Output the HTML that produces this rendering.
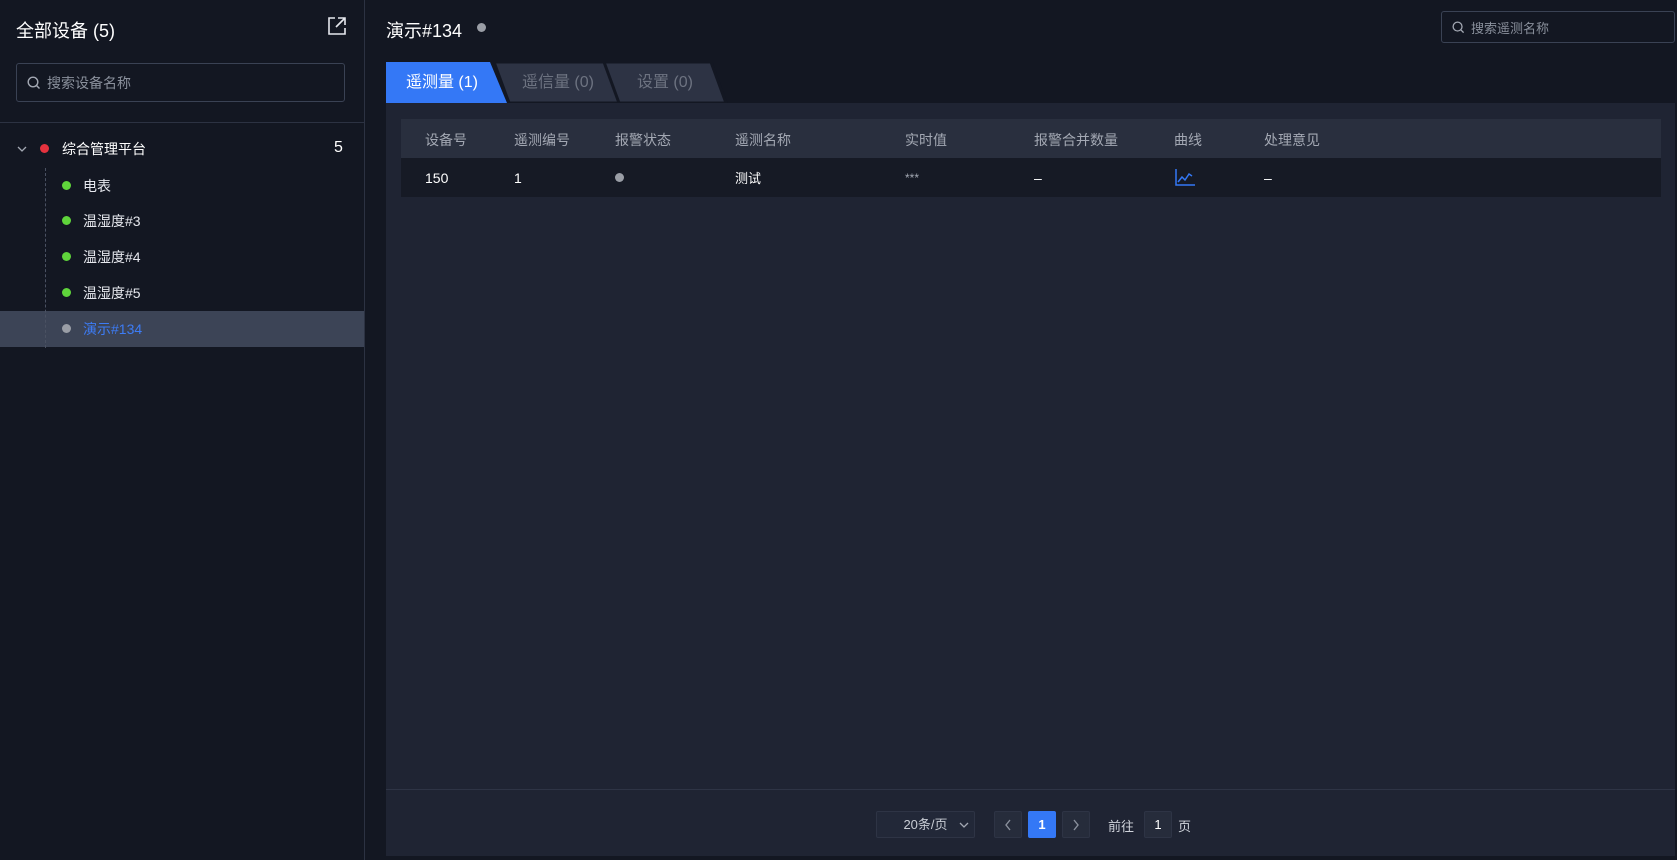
<!DOCTYPE html>
<html><head><meta charset="utf-8"><style>
*{box-sizing:border-box;margin:0;padding:0}
body{width:1677px;height:860px;background:#131722;font-family:"Liberation Sans","Noto Sans CJK SC",sans-serif;color:#e6e8ee;position:relative;overflow:hidden;font-size:14px}
.abs{position:absolute}
.side{left:0;top:0;width:365px;height:860px;border-right:1px solid #2c3242;background:#131722}
.dot{position:absolute;width:9px;height:9px;border-radius:50%}
.search{border:1px solid #3a4254;border-radius:3px;background:#131722;color:#8a909c}
.tab{top:62px;height:41px;line-height:41px;text-align:center;font-size:16px}
.th{top:121px;height:39px;line-height:39px;color:#a3a8b3;font-size:14px}
.td{top:159px;height:39px;line-height:39px;color:#fff;font-size:14px}
.pg{top:811px;height:27px;border:1px solid #2e3445;border-radius:2px;background:#262c3b;color:#c8ccd4;text-align:center;line-height:25px;font-size:13px}
</style></head><body>
<div class="abs side">
  <div class="abs" style="left:16px;top:17px;font-size:18px;color:#fff">全部设备 (5)</div>
  <svg class="abs" style="left:327px;top:16px" width="20" height="20" viewBox="0 0 20 20" fill="none" stroke="#e6e8ee" stroke-width="1.6"><path d="M8 2H2v16h16v-6"/><path d="M11 2h7v7M18 2l-9 9"/></svg>
  <div class="abs search" style="left:16px;top:63px;width:329px;height:39px">
    <svg class="abs" style="left:10px;top:12px" width="14" height="14" viewBox="0 0 14 14" fill="none" stroke="#a3a8b3" stroke-width="1.4"><circle cx="6" cy="6" r="4.8"/><path d="M9.5 9.5l3 3"/></svg>
    <span class="abs" style="left:30px;top:9px;font-size:14px">搜索设备名称</span>
  </div>
  <div class="abs" style="left:0;top:122px;width:365px;height:1px;background:#2c3242"></div>
  <svg class="abs" style="left:17px;top:145px" width="10" height="8" viewBox="0 0 10 8" fill="none" stroke="#a3a8b3" stroke-width="1.3"><path d="M1 2l4 4 4-4"/></svg>
  <div class="dot" style="left:40px;top:144px;background:#e5323e"></div>
  <div class="abs" style="left:62px;top:139px;font-size:14px;color:#fff">综合管理平台</div>
  <div class="abs" style="left:334px;top:139px;font-size:16px;color:#fff">5</div>
  <div class="abs" style="left:0;top:311px;width:364px;height:36px;background:#3c4456"></div>
  <div class="abs" style="left:45px;top:168px;height:180px;border-left:1px dashed #4a5162"></div>
  <div class="dot" style="left:62px;top:181px;background:#5fd43b"></div><div class="abs" style="left:83px;top:176px">电表</div>
  <div class="dot" style="left:62px;top:216px;background:#5fd43b"></div><div class="abs" style="left:83px;top:211px">温湿度#3</div>
  <div class="dot" style="left:62px;top:252px;background:#5fd43b"></div><div class="abs" style="left:83px;top:247px">温湿度#4</div>
  <div class="dot" style="left:62px;top:288px;background:#5fd43b"></div><div class="abs" style="left:83px;top:283px">温湿度#5</div>
  <div class="dot" style="left:62px;top:324px;background:#9a9ea6"></div><div class="abs" style="left:83px;top:319px;color:#3d7cf5">演示#134</div>
</div>
<div class="abs" style="left:386px;top:17px;font-size:18px;color:#fff">演示#134</div>
<div class="dot" style="left:477px;top:23px;background:#9a9ea6"></div>
<div class="abs search" style="left:1441px;top:11px;width:234px;height:32px">
  <svg class="abs" style="left:10px;top:9px" width="13" height="13" viewBox="0 0 14 14" fill="none" stroke="#a3a8b3" stroke-width="1.4"><circle cx="6" cy="6" r="4.8"/><path d="M9.5 9.5l3 3"/></svg>
  <span class="abs" style="left:29px;top:6px;font-size:13px">搜索遥测名称</span>
</div>
<div class="abs" style="left:386px;top:103px;width:1289px;height:753px;background:#1f2433"></div>
<svg class="abs" style="left:386px;top:62px" width="345" height="41">
<polygon points="215,0 325,0 340,41 232,41" fill="#2d3344" stroke="#131722" stroke-width="3"/>
<polygon points="108,0 218,0 233,41 123,41" fill="#2d3344" stroke="#131722" stroke-width="3"/>
<polygon points="0,0 104,0 121,41 0,41" fill="#3478f6"/>
<line x1="106" y1="0" x2="123" y2="41" stroke="#131722" stroke-width="3"/>
</svg>
<div class="abs tab" style="left:386px;width:112px;color:#fff">遥测量 (1)</div>
<div class="abs tab" style="left:505px;width:106px;color:#6d7381">遥信量 (0)</div>
<div class="abs tab" style="left:612px;width:106px;color:#6d7381">设置 (0)</div>
<div class="abs" style="left:401px;top:119px;width:1260px;height:39px;background:#292f3e"></div>
<div class="abs" style="left:401px;top:158px;width:1260px;height:39px;background:#161a25"></div>
<div class="abs th" style="left:425px">设备号</div>
<div class="abs th" style="left:514px">遥测编号</div>
<div class="abs th" style="left:615px">报警状态</div>
<div class="abs th" style="left:735px">遥测名称</div>
<div class="abs th" style="left:905px">实时值</div>
<div class="abs th" style="left:1034px">报警合并数量</div>
<div class="abs th" style="left:1174px">曲线</div>
<div class="abs th" style="left:1264px">处理意见</div>
<div class="abs td" style="left:425px">150</div>
<div class="abs td" style="left:514px">1</div>
<div class="dot" style="left:615px;top:173px;background:#9a9ea6"></div>
<div class="abs td" style="left:735px;font-size:13px">测试</div>
<div class="abs td" style="left:905px;color:#a3a8b3;font-size:12px">***</div>
<div class="abs td" style="left:1034px">–</div>
<svg class="abs" style="left:1175px;top:169px" width="20" height="17" viewBox="0 0 20 17" fill="none" stroke="#3478f6" stroke-width="1.5"><path d="M1 0v16h19"/><path d="M3 13l4-5 3 3 4-6 3 2"/></svg>
<div class="abs td" style="left:1264px">–</div>
<div class="abs" style="left:386px;top:789px;width:1289px;height:1px;background:#2e3445"></div>
<div class="abs pg" style="left:876px;width:99px;background:#222838">20条/页<svg class="abs" style="left:82px;top:10px" width="10" height="7" viewBox="0 0 10 7" fill="none" stroke="#a3a8b3" stroke-width="1.3"><path d="M1 1l4 4 4-4"/></svg></div>
<div class="abs pg" style="left:994px;width:28px"><svg width="8" height="12" viewBox="0 0 8 12" style="margin-top:7px" fill="none" stroke="#8a909c" stroke-width="1.4"><path d="M6 1L2 6l4 5"/></svg></div>
<div class="abs pg" style="left:1028px;width:28px;background:#3478f6;border-color:#3478f6;color:#fff;font-weight:bold">1</div>
<div class="abs pg" style="left:1062px;width:28px"><svg width="8" height="12" viewBox="0 0 8 12" style="margin-top:7px" fill="none" stroke="#8a909c" stroke-width="1.4"><path d="M2 1l4 5-4 5"/></svg></div>
<div class="abs" style="left:1108px;top:816px;font-size:13px;color:#d0d4db">前往</div>
<div class="abs pg" style="left:1144px;width:28px;color:#fff">1</div>
<div class="abs" style="left:1178px;top:816px;font-size:13px;color:#d0d4db">页</div>
</body></html>
